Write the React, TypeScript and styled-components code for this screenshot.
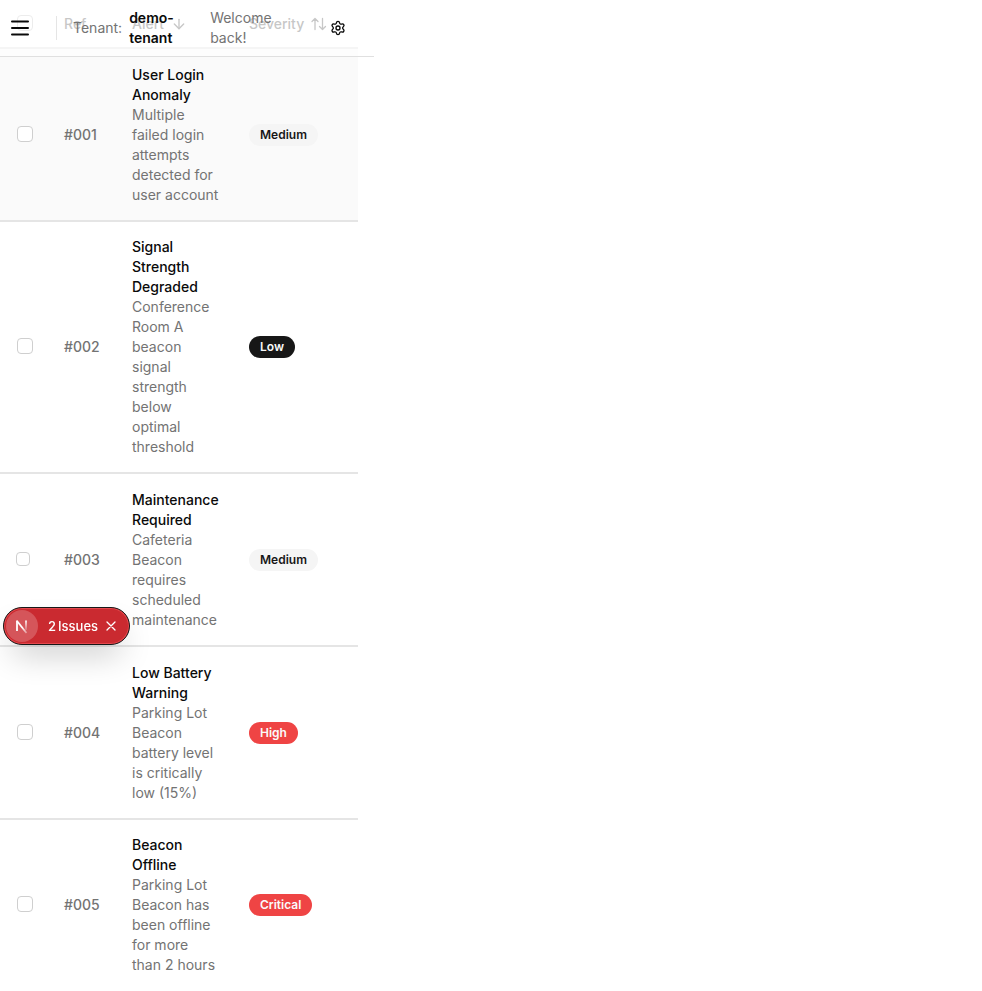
import React from "react";
import styled, { createGlobalStyle, css } from "styled-components";
import { ArrowDown, Settings } from "lucide-react";

const GlobalStyle = createGlobalStyle`
  *, *::before, *::after { box-sizing: border-box; }
  body {
    margin: 0;
    background: #fff;
    color: #0a0a0a;
    font-family: Inter, "Liberation Sans", sans-serif;
    font-size: 14px;
    line-height: 20px;
  }
  button { font: inherit; color: inherit; border: 0; padding: 0; background: none; cursor: pointer; }
`;

const Shell = styled.div`
  position: relative;
  width: 100%;
  max-width: 374px;
`;

const TopBar = styled.header`
  position: absolute;
  inset: 0 0 auto;
  z-index: 2;
  display: flex;
  align-items: center;
  height: 57px;
  padding: 0 28px 0 8px;
  border-bottom: 1px solid #e0e0e0;
  background: rgba(255, 255, 255, 0.6);
`;

const IconButton = styled.button`
  display: flex;
  flex: none;
`;

const Divider = styled.span`
  flex: none;
  width: 1px;
  height: 24px;
  margin: 0 16px 0 24px;
  background: #e5e5e5;
`;

const Muted = styled.span`
  color: #737373;
`;

const TenantName = styled.strong`
  width: 48px;
  margin: 0 33px 0 7px;
  font-weight: 600;
`;

const Welcome = styled(Muted)`
  flex: 1;
  max-width: 64px;
  margin-right: auto;
`;

const AlertTable = styled.table`
  width: calc(100% - 16px);
  table-layout: fixed;
  border-collapse: separate;
  border-spacing: 0;
`;

const Col = styled.col<{ $width?: number }>`
  ${({ $width }) => $width && css`width: ${$width}px;`}
`;

const HeadCell = styled.th`
  height: 49px;
  padding: 0 16px;
  border-bottom: 2px solid #e5e5e5;
  color: #737373;
  font-weight: 500;
  text-align: left;
`;

const SortButton = styled.button`
  display: flex;
  align-items: center;
  gap: 7px;
`;

const Row = styled.tr<{ $selected?: boolean }>`
  background: ${({ $selected }) => ($selected ? "#fafafa" : "#fff")};
  &:last-child > td { border-bottom: 0; }
`;

const Cell = styled.td<{ $top: number }>`
  padding: ${({ $top }) => $top}px 14px 15px 16px;
  border-bottom: 2px solid #e5e5e5;
  vertical-align: middle;
`;

const RefCell = styled(Cell)`
  color: #737373;
  font-weight: 500;
`;

const Title = styled.div`
  font-weight: 500;
`;

const Description = styled.div`
  color: #737373;
`;

const Check = styled.input<{ $small?: boolean }>`
  appearance: none;
  display: block;
  width: ${({ $small }) => ($small ? 14 : 16)}px;
  height: ${({ $small }) => ($small ? 14 : 16)}px;
  margin: 0 0 2px ${({ $small }) => ($small ? 0 : 1)}px;
  border: 1px solid #cfcfcf;
  border-radius: 4px;
  background: #fff;
`;

type Tone = "neutral" | "dark" | "danger";
const tones = {
  neutral: css`background: #f5f5f5; color: #171717;`,
  dark: css`background: #171717; color: #fafafa;`,
  danger: css`background: #ef4444; color: #fafafa;`,
};

const Badge = styled.span<{ $tone: Tone }>`
  display: block;
  width: fit-content;
  padding: 3px 11px;
  border-radius: 11px;
  font-size: 12px;
  line-height: 16px;
  font-weight: 600;
  ${({ $tone }) => tones[$tone]}
`;

const IssuePill = styled.div`
  position: fixed;
  left: 3px;
  bottom: 346px;
  z-index: 3;
  display: flex;
  align-items: center;
  height: 38px;
  padding: 0 12px 0 2px;
  border: 1px solid #171717;
  border-radius: 19px;
  background: #ca2a30;
  box-shadow: inset 0 0 0 1px #e5484d, 0 16px 32px -8px rgba(0, 0, 0, 0.24);
  color: #fff;
  font-size: 13px;
  font-weight: 500;
`;

const LogoButton = styled.button`
  display: flex;
  align-items: center;
  justify-content: center;
  width: 32px;
  height: 32px;
  margin-right: 10px;
  border-radius: 50%;
  background: #d5555a;
`;

const IssueButton = styled.button`
  display: flex;
  gap: 2px;
  margin-right: 7px;
`;

function MenuIcon() {
  return (
    <svg width="24" height="24" viewBox="0 0 24 24" fill="none" stroke="currentColor" strokeWidth="2" strokeLinecap="round">
      <path d="M4 5.5h16M4 12h16M4 18.5h16" />
    </svg>
  );
}

function SortIcon() {
  return (
    <svg width="16" height="16" viewBox="0 0 16 16" fill="none" stroke="currentColor" strokeWidth="1.3" strokeLinecap="round" strokeLinejoin="round">
      <path d="M4 13.5V2.5M1 5.5l3-3 3 3M11.5 2.5v11M8.5 10.5l3 3 3-3" />
    </svg>
  );
}

function BrandMark() {
  return (
    <svg width="16" height="16" viewBox="0 0 16 16" fill="none" strokeWidth="1.8">
      <defs>
        <linearGradient id="diagonal" x1="9" y1="9" x2="15" y2="18" gradientUnits="userSpaceOnUse">
          <stop stopColor="#fff" />
          <stop offset="1" stopColor="#fff" stopOpacity="0" />
        </linearGradient>
        <linearGradient id="upright" x1="12" y1="2" x2="12" y2="14" gradientUnits="userSpaceOnUse">
          <stop stopColor="#fff" />
          <stop offset="1" stopColor="#fff" stopOpacity="0" />
        </linearGradient>
      </defs>
      <path d="M3 3L12.5 15" stroke="url(#diagonal)" />
      <path d="M3 13V2.5" stroke="#fff" />
      <path d="M12 2.5V12" stroke="url(#upright)" />
    </svg>
  );
}

function CloseIcon() {
  return (
    <svg width="12" height="12" viewBox="0 0 12 12" fill="none" stroke="currentColor" strokeWidth="1.3" strokeLinecap="round">
      <path d="M2 2l8 8M10 2l-8 8" />
    </svg>
  );
}

interface AlertItem {
  id: string;
  title: string;
  text: string;
  severity: string;
  tone: Tone;
  top: number;
  selected?: boolean;
  small?: boolean;
}

const alerts: AlertItem[] = [
  { id: "#001", title: "User Login Anomaly", text: "Multiple failed login attempts detected for user account", severity: "Medium", tone: "neutral", top: 16, selected: true },
  { id: "#002", title: "Signal Strength Degraded", text: "Conference Room A beacon signal strength below optimal threshold", severity: "Low", tone: "dark", top: 15 },
  { id: "#003", title: "Maintenance Required", text: "Cafeteria Beacon requires scheduled maintenance", severity: "Medium", tone: "neutral", top: 16, small: true },
  { id: "#004", title: "Low Battery Warning", text: "Parking Lot Beacon battery level is critically low (15%)", severity: "High", tone: "danger", top: 16 },
  { id: "#005", title: "Beacon Offline", text: "Parking Lot Beacon has been offline for more than 2 hours", severity: "Critical", tone: "danger", top: 15 },
];

export default function App() {
  return (
    <>
      <GlobalStyle />
      <Shell>
        <TopBar>
          <IconButton aria-label="Open menu"><MenuIcon /></IconButton>
          <Divider />
          <Muted>Tenant:</Muted>
          <TenantName>demo-tenant</TenantName>
          <Welcome>Welcome back!</Welcome>
          <IconButton aria-label="Settings"><Settings size={16} /></IconButton>
        </TopBar>
        <AlertTable>
          <colgroup>
            <Col $width={48} />
            <Col $width={68} />
            <Col $width={117} />
            <Col />
          </colgroup>
          <thead>
            <tr>
              <HeadCell><Check type="checkbox" aria-label="Select all alerts" /></HeadCell>
              <HeadCell>Ref</HeadCell>
              <HeadCell><SortButton>Alert <ArrowDown size={16} /></SortButton></HeadCell>
              <HeadCell><SortButton>Severity <SortIcon /></SortButton></HeadCell>
            </tr>
          </thead>
          <tbody>
            {alerts.map((a) => (
              <Row key={a.id} $selected={a.selected}>
                <Cell $top={a.top}><Check type="checkbox" $small={a.small} aria-label={`Select alert ${a.id}`} /></Cell>
                <RefCell $top={a.top}>{a.id}</RefCell>
                <Cell $top={a.top}>
                  <Title>{a.title}</Title>
                  <Description>{a.text}</Description>
                </Cell>
                <Cell $top={a.top}><Badge $tone={a.tone}>{a.severity}</Badge></Cell>
              </Row>
            ))}
          </tbody>
        </AlertTable>
      </Shell>
      <IssuePill>
        <LogoButton aria-label="Open developer tools"><BrandMark /></LogoButton>
        <IssueButton><span>2</span><span>Issues</span></IssueButton>
        <IconButton aria-label="Hide issues"><CloseIcon /></IconButton>
      </IssuePill>
    </>
  );
}
